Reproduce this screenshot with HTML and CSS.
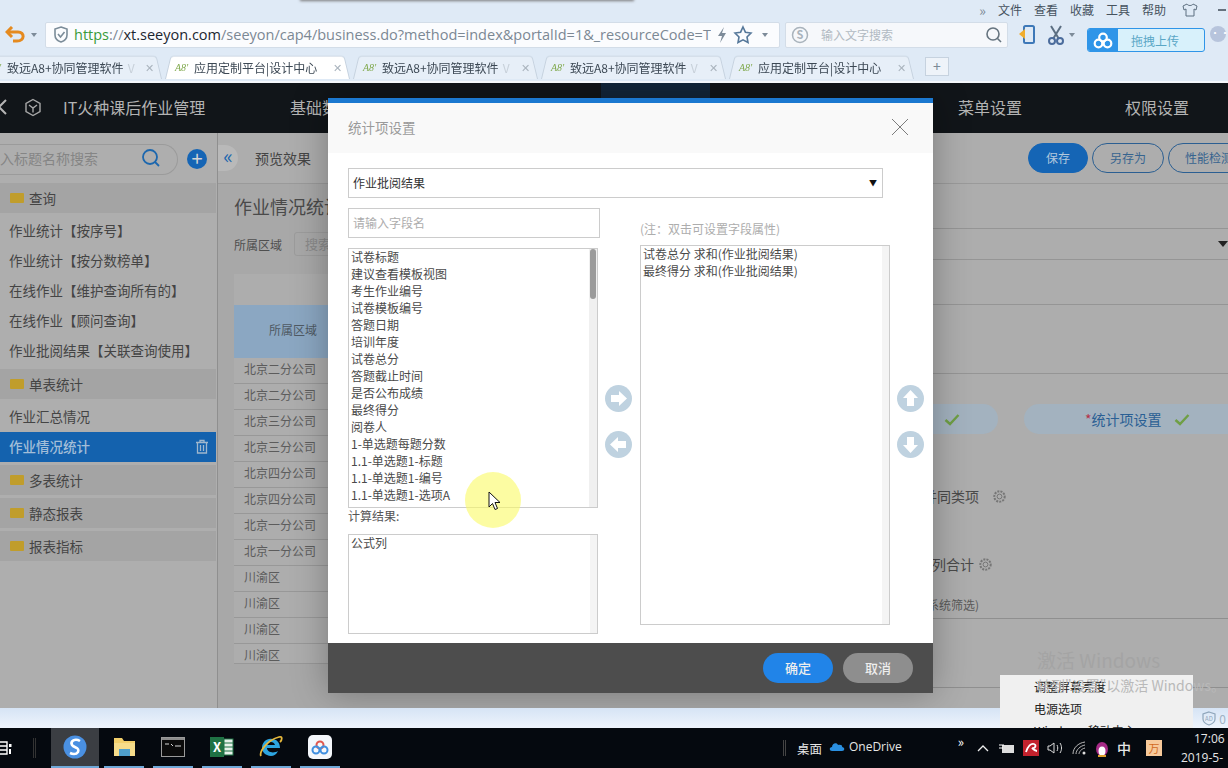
FILE: index.html
```html
<!DOCTYPE html>
<html lang="zh-CN">
<head>
    <meta charset="UTF-8">
    <title>应用定制平台|设计中心</title>
    <link rel="stylesheet" href="styles.css">
</head>
<body>
<div class="browser">
    <div class="menu-row">
        <span class="menu-more">»</span>
        <span>文件</span><span>查看</span><span>收藏</span><span>工具</span><span>帮助</span>
        <svg class="shirt" width="18" height="16" viewBox="0 0 18 16"><path d="M6 2 L2 4 L3 8 L5 7 V14 H13 V7 L15 8 L16 4 L12 2 C11 4 7 4 6 2Z" fill="none" stroke="#5d6f80"/></svg>
        <span class="menu-min"></span>
    </div>
    <div class="address-row">
        <svg class="back" width="22" height="18" viewBox="0 0 22 18"><path d="M3 6 H13 C20 6 20 15 12 15 H8" fill="none" stroke="#e58a1f" stroke-width="3"/><path d="M7 1 L2 6 L7 11" fill="none" stroke="#e58a1f" stroke-width="3"/></svg>
        <span class="caret"></span>
        <div class="address">
            <svg width="16" height="17" viewBox="0 0 16 17"><path d="M8 1 L14 3 V9 C14 13 11 15 8 16 C5 15 2 13 2 9 V3Z" fill="none" stroke="#7b8c99" stroke-width="1.6"/><path d="M5 8 L7.5 11 L11.5 6" fill="none" stroke="#7b8c99" stroke-width="1.6"/></svg>
            <div class="url"><span class="https">https</span>://<span class="host">xt.seeyon.com</span>/seeyon/cap4/business.do?method=index&amp;portalId=1&amp;_resourceCode=T</div>
            <svg width="12" height="18" viewBox="0 0 12 18"><path d="M8 1 L2 10 H6 L4 17 L10 7 H6Z" fill="#7d8b99"/></svg>
            <svg width="20" height="19" viewBox="0 0 20 19"><path d="M10 2 L12.4 7.2 L18 8 L14 12 L15 17.5 L10 14.8 L5 17.5 L6 12 L2 8 L7.6 7.2Z" fill="none" stroke="#56789a" stroke-width="1.6"/></svg>
            <span class="caret"></span>
        </div>
        <div class="search-box">
            <svg width="18" height="18" viewBox="0 0 18 18"><circle cx="9" cy="9" r="7.5" fill="none" stroke="#a9b3bc" stroke-width="1.5"/><text x="9" y="13" text-anchor="middle" class="s-mark">S</text></svg>
            <span class="search-hint">输入文字搜索</span>
            <svg width="18" height="18" viewBox="0 0 18 18"><circle cx="8" cy="8" r="6" fill="none" stroke="#66747f" stroke-width="1.6"/><path d="M12.5 12.5 L16 16" stroke="#66747f" stroke-width="1.6"/></svg>
        </div>
        <svg class="tool-phone" width="18" height="20" viewBox="0 0 18 20"><rect x="6" y="1" width="10" height="17" rx="1.5" fill="none" stroke="#3d78b8" stroke-width="2"/><path d="M1 9 L7 4 V14Z" fill="#f0ad2e"/></svg>
        <svg class="tool-cut" width="18" height="20" viewBox="0 0 18 20"><path d="M4 1 L12 14 M14 1 L6 14" stroke="#5c6f82" stroke-width="2"/><circle cx="5" cy="16" r="3" fill="none" stroke="#4b6c9c" stroke-width="2"/><circle cx="13" cy="16" r="3" fill="none" stroke="#4b6c9c" stroke-width="2"/></svg>
        <span class="caret"></span>
    </div>
    <div class="tab-row">
        <div class="tab tab-first"><i class="fav">A8'</i><span class="tab-title">致远A8+协同管理软件</span><span class="tab-fade">V</span><span class="tab-x">✕</span></div>
        <div class="tab tab-on"><i class="fav">A8'</i><span class="tab-title">应用定制平台|设计中心</span><span class="tab-x">✕</span></div>
        <div class="tab"><i class="fav">A8'</i><span class="tab-title">致远A8+协同管理软件</span><span class="tab-fade">V</span><span class="tab-x">✕</span></div>
        <div class="tab"><i class="fav">A8'</i><span class="tab-title">致远A8+协同管理软件</span><span class="tab-fade">V</span><span class="tab-x">✕</span></div>
        <div class="tab"><i class="fav">A8'</i><span class="tab-title">应用定制平台|设计中心</span><span class="tab-x">✕</span></div>
        <div class="tab-add">+</div>
    </div>
</div>

<div class="app">
    <div class="topnav">
        <svg class="nav-back" width="10" height="18" viewBox="0 0 10 18"><path d="M8 2 L1 9 L8 16" fill="none" stroke="#b5b5b5" stroke-width="2"/></svg>
        <svg class="nav-cube" width="18" height="19" viewBox="0 0 18 19"><path d="M9 1.5 L16 5.5 V13.5 L9 17.5 L2 13.5 V5.5Z M5 7 L9 10 L13 7 M9 10 V14.5" fill="none" stroke="#a8a8a8" stroke-width="1.4"/></svg>
        <span class="nav-title">IT火种课后作业管理</span>
        <span class="nav-item nav-base">基础数据</span>
        <span class="nav-item nav-menu">菜单设置</span>
        <span class="nav-item nav-perm">权限设置</span>
    </div>
    <div class="workspace">
        <div class="sidebar">
            <div class="side-search">
                <div class="side-input">
                    <span>入标题名称搜索</span>
                    <svg width="20" height="20" viewBox="0 0 20 20"><circle cx="9" cy="9" r="7" fill="none" stroke="#1c67ae" stroke-width="1.8"/><path d="M14 14 L18 18" stroke="#1c67ae" stroke-width="1.8"/></svg>
                </div>
                <span class="side-add">+</span>
            </div>
            <div class="side-group"><span class="folder"></span>查询</div>
            <div class="side-item">作业统计【按序号】</div>
            <div class="side-item">作业统计【按分数榜单】</div>
            <div class="side-item">在线作业【维护查询所有的】</div>
            <div class="side-item">在线作业【顾问查询】</div>
            <div class="side-item">作业批阅结果【关联查询使用】</div>
            <div class="side-group"><span class="folder"></span>单表统计</div>
            <div class="side-item">作业汇总情况</div>
            <div class="side-item side-on">作业情况统计
                <svg width="14" height="15" viewBox="0 0 14 15"><path d="M1 3.5 H13 M5 3 V1.5 H9 V3 M2.5 3.5 V14 H11.5 V3.5 M5.5 6 V12 M8.5 6 V12" fill="none" stroke="#9fb7cd" stroke-width="1.3"/></svg>
            </div>
            <div class="side-group group-gap"><span class="folder"></span>多表统计</div>
            <div class="side-group group-gap"><span class="folder"></span>静态报表</div>
            <div class="side-group group-gap"><span class="folder"></span>报表指标</div>
        </div>
        <div class="main">
            <div class="toolbar">
                <span class="collapse">«</span>
                <span class="preview">预览效果</span>
                <span class="btn btn-save">保存</span>
                <span class="btn">另存为</span>
                <span class="btn btn-last">性能检测</span>
            </div>
            <div class="panes">
                <div class="center">
                    <h2 class="report-title">作业情况统计</h2>
                    <div class="filter"><span>所属区域</span><span class="filter-input">搜索</span></div>
                    <div class="table-top"></div>
                    <div class="table-head">所属区域</div>
                    <div class="table-row">北京二分公司</div>
                    <div class="table-row">北京二分公司</div>
                    <div class="table-row">北京三分公司</div>
                    <div class="table-row">北京三分公司</div>
                    <div class="table-row">北京四分公司</div>
                    <div class="table-row">北京四分公司</div>
                    <div class="table-row">北京一分公司</div>
                    <div class="table-row">北京一分公司</div>
                    <div class="table-row">川渝区</div>
                    <div class="table-row">川渝区</div>
                    <div class="table-row">川渝区</div>
                    <div class="table-row row-cut">川渝区</div>
                </div>
                <div class="props">
                    <div class="prop-line line-45"></div>
                    <div class="prop-line line-31"><span class="prop-arrow"></span></div>
                    <div class="prop-line line-45"></div>
                    <div class="prop-line line-69"></div>
                    <div class="pills">
                        <div class="pill pill-short">
                            <svg width="16" height="13" viewBox="0 0 16 13"><path d="M1.5 7 L6 11 L14.5 2" fill="none" stroke="#6f9f45" stroke-width="2.4"/></svg>
                        </div>
                        <div class="pill pill-long">
                            <span><b>*</b>统计项设置</span>
                            <svg width="16" height="13" viewBox="0 0 16 13"><path d="M1.5 7 L6 11 L14.5 2" fill="none" stroke="#6f9f45" stroke-width="2.4"/></svg>
                        </div>
                    </div>
                    <div class="prop-opt opt-merge">合并同类项
                        <svg class="gear" width="15" height="15" viewBox="0 0 15 15"><circle cx="7.5" cy="7.5" r="2.4" fill="none" stroke="#767676"/><circle cx="7.5" cy="7.5" r="5.2" fill="none" stroke="#767676" stroke-width="2" stroke-dasharray="2 1.1"/></svg>
                    </div>
                    <div class="prop-opt opt-sum">行列合计
                        <svg class="gear" width="15" height="15" viewBox="0 0 15 15"><circle cx="7.5" cy="7.5" r="2.4" fill="none" stroke="#767676"/><circle cx="7.5" cy="7.5" r="5.2" fill="none" stroke="#767676" stroke-width="2" stroke-dasharray="2 1.1"/></svg>
                    </div>
                    <div class="prop-note">(系统筛选)</div>
                    <div class="prop-rule"></div>
                    <div class="prop-rule rule-low"></div>
                </div>
            </div>
        </div>
    </div>

    <div class="modal">
        <div class="modal-head">
            <span>统计项设置</span>
            <svg width="18" height="18" viewBox="0 0 18 18"><path d="M1 1 L17 17 M17 1 L1 17" stroke="#6d6d6d" stroke-width="0.9"/></svg>
        </div>
        <div class="modal-body">
            <div class="form-select">作业批阅结果<span>▼</span></div>
            <div class="transfer">
                <div class="col">
                    <div class="field-input">请输入字段名</div>
                    <div class="field-list">
                        <div class="list-items">
                            <div>试卷标题</div>
                            <div>建议查看模板视图</div>
                            <div>考生作业编号</div>
                            <div>试卷模板编号</div>
                            <div>答题日期</div>
                            <div>培训年度</div>
                            <div>试卷总分</div>
                            <div>答题截止时间</div>
                            <div>是否公布成绩</div>
                            <div>最终得分</div>
                            <div>阅卷人</div>
                            <div>1-单选题每题分数</div>
                            <div>1.1-单选题1-标题</div>
                            <div>1.1-单选题1-编号</div>
                            <div>1.1-单选题1-选项A</div>
                        </div>
                        <div class="scroll"><span></span></div>
                    </div>
                    <div class="result-label">计算结果:</div>
                    <div class="result-box">公式列</div>
                </div>
                <div class="arrows">
                    <svg width="27" height="27" viewBox="0 0 27 27"><circle cx="13.5" cy="13.5" r="13.5" fill="#bfd2e0"/><path d="M6 10 H14 V6 L22 13.5 L14 21 V17 H6Z" fill="#fff"/></svg>
                    <svg width="27" height="27" viewBox="0 0 27 27"><circle cx="13.5" cy="13.5" r="13.5" fill="#bfd2e0"/><path d="M21 10 H13 V6 L5 13.5 L13 21 V17 H21Z" fill="#fff"/></svg>
                </div>
                <div class="col">
                    <div class="picked-note">(注：双击可设置字段属性)</div>
                    <div class="picked-list">
                        <div>试卷总分 求和(作业批阅结果)</div>
                        <div>最终得分 求和(作业批阅结果)</div>
                    </div>
                </div>
                <div class="arrows">
                    <svg width="27" height="27" viewBox="0 0 27 27"><circle cx="13.5" cy="13.5" r="13.5" fill="#bfd2e0"/><path d="M10 21 V13 H6 L13.5 5 L21 13 H17 V21Z" fill="#fff"/></svg>
                    <svg width="27" height="27" viewBox="0 0 27 27"><circle cx="13.5" cy="13.5" r="13.5" fill="#bfd2e0"/><path d="M10 6 V14 H6 L13.5 22 L21 14 H17 V6Z" fill="#fff"/></svg>
                </div>
            </div>
        </div>
        <div class="modal-foot">
            <span class="foot-btn foot-ok">确定</span>
            <span class="foot-btn foot-cancel">取消</span>
        </div>
    </div>
</div>

<div class="statusbar">
    <svg width="14" height="15" viewBox="0 0 14 15"><path d="M7 1 L13 3 V8 C13 11 10 13 7 14 C4 13 1 11 1 8 V3Z" fill="none" stroke="#8fa6bb" stroke-width="1.2"/><text x="7" y="10" text-anchor="middle" class="ad-mark">AD</text></svg>
    <span>0</span>
</div>

<div class="taskbar">
    <svg class="task-view" width="12" height="16" viewBox="0 0 12 16"><path d="M0 2 H7 V14 H0 M0 6 H7 M0 10 H7" fill="none" stroke="#fff" stroke-width="1.4"/><rect x="9" y="4" width="2.5" height="3" fill="#fff"/><rect x="9" y="9" width="2" height="5" fill="#fff"/></svg>
    <span class="task-sep"></span>
    <div class="task-app task-active">
        <svg width="24" height="24" viewBox="0 0 24 24"><circle cx="12" cy="12" r="11.5" fill="#4a90e2"/><path d="M17 6 C12 3 7 6 9 10 C11 13 17 12 15 17 C13 20 9 19 7 18" fill="none" stroke="#fff" stroke-width="2.6"/></svg>
    </div>
    <div class="task-app">
        <svg width="23" height="20" viewBox="0 0 23 20"><path d="M1 1 H9 L11 4 H22 V19 H1Z" fill="#f2cf6b"/><rect x="1" y="6" width="21" height="13" fill="#f6dc8a"/><rect x="6" y="12" width="11" height="7" fill="#4f9fcb"/></svg>
    </div>
    <div class="task-app">
        <svg width="24" height="20" viewBox="0 0 24 20"><rect x="0.5" y="0.5" width="23" height="19" fill="#0b0b0b" stroke="#9a9a9a"/><rect x="1" y="1" width="22" height="2" fill="#8c8c8c"/><path d="M4 7 H8 M10 7 L12 9 M14 9 H20" stroke="#d8d8d8"/></svg>
    </div>
    <div class="task-app">
        <svg width="24" height="20" viewBox="0 0 24 20"><rect x="8" y="2" width="15" height="16" fill="#e7f1ea" stroke="#1f7244"/><path d="M14 2 V18 M8 6 H23 M8 10 H23 M8 14 H23" stroke="#1f7244"/><rect x="0" y="0" width="14" height="20" fill="#1f7244"/><text x="7" y="15" text-anchor="middle" class="xl-mark">X</text></svg>
    </div>
    <div class="task-app">
        <svg width="24" height="24" viewBox="0 0 24 24"><path d="M3 13 C3 7 8 3 13 4 C18 4 21 8 21 13 H8 C8 17 14 19 19 16 C17 21 12 22 8 20 C5 19 3 16 3 13Z M8 10 H16 C15 6 9 6 8 10Z" fill="#2da5e0" fill-rule="evenodd"/><path d="M2 21 C0 17 8 5 20 2 C24 1 23 5 21 7" fill="none" stroke="#e8b93c" stroke-width="1.8"/></svg>
    </div>
    <div class="task-app">
        <span class="cloud-tile"><svg width="18" height="15" viewBox="0 0 18 15"><circle cx="9" cy="5" r="3.5" fill="none" stroke="#e0574f" stroke-width="2"/><circle cx="5" cy="10" r="3.5" fill="none" stroke="#3f8fe0" stroke-width="2"/><circle cx="13" cy="10" r="3.5" fill="none" stroke="#3f8fe0" stroke-width="2"/></svg></span>
    </div>
    <span class="task-fill"></span>
    <span class="task-sep2"></span>
    <span class="task-text desk">桌面</span>
    <svg class="drive-icon" width="16" height="10" viewBox="0 0 16 10"><path d="M3 10 C0 10 0 6 3 6 C3 2 8 1 9 4 C12 3 14 5 13 6 C16 6 16 10 13 10Z" fill="#2a8fe0"/></svg>
    <span class="task-text drive">OneDrive</span>
    <span class="tray-more">»</span>
    <svg class="tray up" width="12" height="8" viewBox="0 0 12 8"><path d="M1 7 L6 2 L11 7" fill="none" stroke="#eee" stroke-width="1.3"/></svg>
    <svg class="tray" width="16" height="11" viewBox="0 0 16 11"><rect x="3" y="2" width="12" height="8" fill="#ddd"/><path d="M0 2 H5 M0 5 H4" stroke="#fff"/></svg>
    <span class="tray-tile tile-red"><svg width="13" height="12" viewBox="0 0 13 12"><path d="M1 10 C3 4 6 1 9 2 C12 3 10 7 7 6 C9 8 11 9 12 9" fill="none" stroke="#fff" stroke-width="1.8"/></svg></span>
    <svg class="tray" width="17" height="14" viewBox="0 0 17 14"><path d="M1 5 H3 L7 2 V12 L3 9 H1Z M10 4 C11 6 11 8 10 10 M13 2 C15 5 15 9 13 12" fill="none" stroke="#ddd"/></svg>
    <svg class="tray" width="15" height="14" viewBox="0 0 15 14"><path d="M1 13 C1 7 6 2 13 1 M4 13 C4 9 8 5 13 4 M7 13 C7 11 9 8 13 7" fill="none" stroke="#bbb"/><circle cx="12" cy="12" r="1.5" fill="#ddd"/></svg>
    <svg class="tray" width="14" height="17" viewBox="0 0 14 17"><ellipse cx="7" cy="9" rx="6" ry="7" fill="#a62a86"/><ellipse cx="7" cy="11" rx="3.5" ry="4.5" fill="#fff"/><path d="M3 15 H11 V17 H3Z" fill="#e0a22c"/></svg>
    <span class="task-text ime">中</span>
    <span class="tray-tile tile-orange">万</span>
    <div class="clock"><span>17:06</span><span>2019-5-</span></div>
</div>

<!-- over everything: window edge, balloon, tray menu, activation text, recorder cursor -->
<div class="window-edge"></div>
<div class="upload-badge">
    <span class="upload-icon"><svg width="20" height="17" viewBox="0 0 20 17"><circle cx="10" cy="5.5" r="3.8" fill="none" stroke="#fff" stroke-width="2.2"/><circle cx="5.5" cy="11.5" r="3.8" fill="none" stroke="#fff" stroke-width="2.2"/><circle cx="14.5" cy="11.5" r="3.8" fill="none" stroke="#fff" stroke-width="2.2"/></svg></span>
    <span class="upload-text">拖拽上传</span>
</div>
<span class="user-dot">···</span>
<div class="tray-menu">
    <div>调整屏幕亮度</div>
    <div>电源选项</div>
    <div>Windows 移动中心</div>
</div>
<div class="activate">
    <div class="activate-big">激活 Windows</div>
    <div>转到"设置"以激活 Windows。</div>
</div>
<div class="cursor-glow"></div>
<svg class="cursor" width="13" height="20" viewBox="0 0 13 20"><path d="M1 1 V16 L4.5 12.5 L7 18.5 L9.5 17.5 L7 11.5 H12Z" fill="#fff" stroke="#111"/></svg>
</body>
</html>
```

FILE: styles.css
```css
* {
    box-sizing: border-box;
}

html, body {
    margin: 0;
    height: 768px;
    overflow: hidden;
}

body {
    position: relative;
    width: 1228px;
    display: flex;
    flex-direction: column;
    font-family: "Noto Sans CJK SC", "Liberation Sans", sans-serif;
    font-size: 12px;
    color: #333;
    background: #adadad;
}

/* browser chrome */
.browser {
    height: 83px;
    flex: none;
    background: #dfeaf6;
    border-bottom: 2px solid #f4f7fb;
    overflow: hidden;
}

.menu-row {
    height: 20px;
    display: flex;
    align-items: center;
    justify-content: flex-end;
    gap: 12px;
    color: #46525e;
    line-height: 20px;
}

.menu-more {
    color: #7a8794;
    font-size: 14px;
}

.shirt {
    margin-left: 3px;
}

.menu-min {
    width: 8px;
    height: 2px;
    margin-left: 7px;
    margin-right: 2px;
    background: #66727e;
}

.address-row {
    height: 33px;
    display: flex;
    align-items: center;
    padding: 0 0 4px 5px;
}

.caret {
    width: 0;
    height: 0;
    margin-left: 4px;
    border: 3px solid transparent;
    border-top: 4px solid #7d8b99;
    border-bottom: 0;
}

.address {
    width: 735px;
    height: 26px;
    margin-left: 8px;
    display: flex;
    align-items: center;
    padding: 0 11px 0 7px;
    gap: 5px;
    background: #fbfcfe;
    border: 1px solid #d3dde8;
    border-radius: 2px;
}

.url {
    flex: 1;
    white-space: nowrap;
    overflow: hidden;
    font-family: "Open Sans", "Liberation Sans", sans-serif;
    font-size: 14.5px;
    color: #7c8894;
}

.https {
    color: #3a9b3a;
}

.host {
    color: #1c2630;
}

.search-box {
    width: 223px;
    height: 26px;
    margin-left: 5px;
    display: flex;
    align-items: center;
    padding: 0 4px 0 5px;
    background: #f6f8fb;
    border: 1px solid #d3dde8;
    border-radius: 2px;
}

.search-hint {
    flex: 1;
    padding-left: 12px;
    color: #b1bac2;
}

.s-mark {
    font-size: 11px;
    font-weight: bold;
    fill: #a9b3bc;
}

.xl-mark {
    font-size: 13px;
    font-weight: bold;
    fill: #fff;
}

.tool-phone {
    margin-left: 10px;
}

.tool-cut {
    margin-left: 11px;
}

.tab-row {
    height: 26px;
    display: flex;
    gap: 3px;
    margin-left: -18px;
    align-items: flex-end;
}

.tab {
    position: relative;
    width: 185px;
    height: 25px;
    display: flex;
    align-items: center;
    padding: 1px 8px 0 10px;
    color: #3c4854;
    white-space: nowrap;
}

.tab::before {
    content: "";
    position: absolute;
    inset: 0;
    z-index: 0;
    background: #e7eff8;
    border: 1px solid #c6d2df;
    border-bottom: 0;
    border-radius: 4px 4px 0 0;
    transform: perspective(40px) rotateX(6deg);
    transform-origin: bottom;
}

.tab > * {
    position: relative;
}

.tab-first {
    width: 180px;
    padding-left: 6px;
}

.tab-on::before {
    background: #fff;
}

.fav {
    width: 19px;
    font-family: "Liberation Serif", serif;
    font-size: 10px;
    color: #7fa84b;
    flex: none;
}

.tab-title {
    flex: none;
}

.tab-fade {
    margin-left: 4px;
    color: #c7d0d9;
}

.tab-x {
    margin-left: auto;
    color: #a9b3bd;
    font-size: 11px;
}

.tab-add {
    width: 24px;
    height: 19px;
    margin: 0 0 3px 8px;
    color: #7c8a97;
    font-size: 14px;
    line-height: 17px;
    text-align: center;
    background: #eef3f9;
    border: 1px solid #c6d2df;
}

/* application, dimmed by the dialog */
.app {
    position: relative;
    height: 625px;
    flex: none;
    overflow: hidden;
}

.topnav {
    height: 50px;
    display: flex;
    align-items: center;
    padding-bottom: 2px;
    background: linear-gradient(to right, #111519 601px, #13263a 601px, #13263a 710px, #111519 710px);
    color: #b3b3b3;
    font-size: 16px;
}

.nav-back {
    margin-left: -2px;
}

.nav-cube {
    margin-left: 16px;
}

.nav-title {
    margin-left: 21px;
    width: 227px;
}

.nav-base {
    width: 668px;
}

.nav-menu {
    width: 167px;
}

.workspace {
    height: 575px;
    display: flex;
}

.sidebar {
    width: 218px;
    flex: none;
    border-right: 1px solid #8f8f8f;
    background: #aeaeae;
}

.side-search {
    height: 50px;
    display: flex;
    align-items: center;
    padding-top: 2px;
}

.side-input {
    width: 178px;
    height: 31px;
    display: flex;
    align-items: center;
    justify-content: space-between;
    padding: 0 16px 2px 0;
    font-size: 14px;
    color: #858585;
    border: 1px solid #9b9b9b;
    border-left: 0;
    border-radius: 0 16px 16px 0;
}

.side-add {
    width: 20px;
    height: 20px;
    margin-left: 9px;
    border-radius: 50%;
    background: #1565b5;
    color: #d4d4d4;
    font-size: 20px;
    line-height: 18px;
    text-align: center;
}

.side-group {
    width: 216px;
    height: 30px;
    display: flex;
    align-items: center;
    padding-left: 10px;
    font-size: 13.5px;
    color: #444;
    background: #a4a4a4;
}

.group-gap {
    margin-top: 3px;
}

.folder {
    width: 14px;
    height: 10px;
    margin-right: 5px;
    border-radius: 1px;
    background: #c09d2c;
}

.side-item {
    width: 216px;
    height: 30px;
    display: flex;
    align-items: center;
    justify-content: space-between;
    padding: 0 7px 2px 9px;
    font-size: 13.5px;
    color: #444;
    white-space: nowrap;
}

.side-group + .side-item {
    margin-top: 3px;
}

.side-item:has(+ .side-group) {
    margin-bottom: 3px;
}

.side-on {
    background: #1462ae;
    color: #a3bed8;
    font-weight: 500;
}

.main {
    flex: 1;
    min-width: 0;
    display: flex;
    flex-direction: column;
}

.toolbar {
    height: 51px;
    flex: none;
    display: flex;
    align-items: center;
    padding-bottom: 1px;
    border-bottom: 1px solid #9a9a9a;
}

.collapse {
    width: 20px;
    height: 26px;
    flex: none;
    color: #1c67ae;
    background: #b9b9b9;
    font-size: 20px;
    line-height: 22px;
    text-align: center;
    border-radius: 0 13px 13px 0;
}

.preview {
    width: 773px;
    flex: none;
    margin-left: 17px;
    font-size: 14px;
    color: #444;
}

.btn {
    width: 72px;
    height: 30px;
    flex: none;
    margin-left: 4px;
    color: #37648f;
    line-height: 28px;
    text-align: center;
    border: 1px solid #2b5f92;
    border-radius: 15px;
}

.btn-save {
    width: 60px;
    margin-left: 0;
    color: #b2c8dd;
    background: #1565b5;
    border-color: #1565b5;
}

.btn-last {
    width: 90px;
    padding-left: 16px;
    text-align: left;
    white-space: nowrap;
}

.panes {
    flex: 1;
    display: flex;
    min-height: 0;
}

.center {
    width: 542px;
    flex: none;
    padding-left: 16px;
    overflow: hidden;
    background: #a8a8a8;
}

.report-title {
    margin: 10px 0 0;
    font-size: 18px;
    font-weight: 400;
    line-height: 25px;
    color: #4a4a4a;
}

.filter {
    height: 26px;
    margin-top: 12px;
    display: flex;
    align-items: center;
    gap: 12px;
    color: #4f4f4f;
}

.filter-input {
    width: 200px;
    height: 24px;
    padding-left: 10px;
    line-height: 22px;
    color: #8a8a8a;
    font-size: 13px;
    border: 1px solid #9c9c9c;
    border-radius: 3px;
}

.table-top {
    height: 31px;
    margin-top: 17px;
    background: #adadad;
}

.table-head {
    height: 53px;
    padding-left: 35px;
    line-height: 50px;
    color: #4f5a64;
    background: #8ba7c2;
}

.table-row {
    height: 26px;
    padding-left: 10px;
    line-height: 22px;
    color: #5c5c5c;
    background: #adadad;
    border-bottom: 1px solid #989898;
}

.row-cut {
    height: 20px;
    overflow: hidden;
}

.props {
    flex: 1;
    min-width: 0;
    overflow: hidden;
}

.prop-line {
    position: relative;
    border-bottom: 1px solid #959595;
}

.line-45 {
    height: 45px;
}

.line-31 {
    height: 31px;
}

.line-69 {
    height: 69px;
}

.prop-arrow {
    position: absolute;
    right: 0;
    top: 12px;
    border: 5px solid transparent;
    border-top: 6px solid #222;
    border-bottom: 0;
}

.pills {
    display: flex;
    gap: 26px;
    margin-top: 30px;
    padding-left: 40px;
}

.pill {
    height: 30px;
    display: flex;
    align-items: center;
    flex: none;
    border-radius: 15px;
    background: #a3b2bf;
}

.pill-short {
    width: 198px;
    justify-content: flex-end;
    padding-right: 38px;
}

.pill-long {
    width: 240px;
    padding-left: 61px;
    gap: 12px;
    font-size: 14px;
    color: #2a5f94;
}

.pill-long b {
    color: #b5324a;
    font-weight: 400;
}

.prop-opt {
    display: flex;
    align-items: center;
    font-size: 14px;
    color: #4a4a4a;
    line-height: 20px;
}

.opt-merge {
    margin-top: 52px;
    padding-left: 149px;
    gap: 13px;
}

.opt-sum {
    margin-top: 48px;
    padding-left: 158px;
    gap: 4px;
}

.prop-note {
    margin-top: 22px;
    padding-left: 163px;
    line-height: 18px;
    color: #5a5a5a;
}

.prop-rule {
    margin-top: 4px;
    border-bottom: 1px solid #8f8f8f;
}

.rule-low {
    margin-top: 68px;
}

/* dialog */
.modal {
    position: absolute;
    left: 328px;
    top: 15px;
    width: 605px;
    height: 595px;
    background: #fff;
    border-top: 5px solid #1b78d0;
    box-shadow: 0 0 34px rgba(0, 0, 0, 0.3);
    display: flex;
    flex-direction: column;
}

.modal-head {
    height: 50px;
    flex: none;
    display: flex;
    align-items: center;
    justify-content: space-between;
    padding: 0 24px 2px 20px;
    font-size: 13.5px;
    color: #9a9a9a;
    background: #f9f9f9;
}

.modal-body {
    flex: 1;
    padding: 15px 0 0 20px;
}

.form-select {
    width: 535px;
    height: 30px;
    display: flex;
    align-items: center;
    justify-content: space-between;
    padding: 0 5px 2px 4px;
    color: #333;
    border: 1px solid #ccc;
}

.form-select span {
    font-size: 8px;
    color: #111;
}

.transfer {
    display: flex;
    margin-top: 10px;
}

.col {
    width: 250px;
    flex: none;
}

.field-input {
    width: 252px;
    height: 30px;
    padding-left: 4px;
    line-height: 28px;
    color: #adadad;
    border: 1px solid #ccc;
}

.field-list {
    height: 260px;
    margin-top: 10px;
    display: flex;
    overflow: hidden;
    border: 1px solid #ccc;
}

.list-items {
    flex: 1;
    margin-top: -1px;
    padding-left: 2px;
    line-height: 17px;
    color: #4a4a4a;
}

.scroll {
    width: 8px;
    flex: none;
    padding: 0 1px;
    background: #f0f0f0;
}

.scroll span {
    display: block;
    height: 50px;
    border-radius: 3px;
    background: #9b9b9b;
}

.result-label {
    height: 26px;
    line-height: 15px;
    color: #555;
}

.result-box {
    height: 100px;
    padding-left: 2px;
    line-height: 15px;
    color: #4a4a4a;
    border: 1px solid #ccc;
    background: linear-gradient(to left, #f4f4f4 7px, #fff 7px);
}

.arrows {
    width: 42px;
    flex: none;
    display: flex;
    flex-direction: column;
    align-items: center;
    gap: 19px;
    padding: 177px 1px 0 0;
}

.picked-note {
    height: 37px;
    padding-top: 12px;
    line-height: 18px;
    color: #adadad;
}

.picked-list {
    height: 380px;
    padding-left: 2px;
    line-height: 17px;
    color: #4a4a4a;
    border: 1px solid #ccc;
    background: linear-gradient(to left, #f4f4f4 7px, #fff 7px);
}

.picked-list div:first-child {
    margin-top: -1px;
}

.modal-foot {
    height: 50px;
    flex: none;
    display: flex;
    align-items: center;
    justify-content: flex-end;
    gap: 10px;
    padding-right: 20px;
    background: #4d4d4d;
}

.foot-btn {
    width: 70px;
    height: 30px;
    color: #eee;
    font-size: 13px;
    font-weight: 500;
    line-height: 30px;
    text-align: center;
    border-radius: 15px;
}

.foot-ok {
    background: #2184e8;
}

.foot-cancel {
    background: #8e8e8e;
}

/* bottom of the browser and the windows taskbar */
.statusbar {
    height: 20px;
    flex: none;
    display: flex;
    align-items: center;
    justify-content: flex-end;
    gap: 3px;
    padding-right: 2px;
    color: #9fb2c4;
    background: linear-gradient(#d6e4f5, #eef4fc);
}

.ad-mark {
    font-size: 6px;
    fill: #8fa6bb;
}

.taskbar {
    height: 40px;
    flex: none;
    display: flex;
    align-items: center;
    background: #05090f;
    color: #e6e6e6;
    overflow: hidden;
}

.task-sep {
    width: 3px;
    height: 20px;
    margin: 0 15px 0 21px;
    border-left: 1px solid #333;
    border-right: 1px solid #333;
}

.task-view {
    flex: none;
}

.task-app {
    width: 40px;
    height: 40px;
    margin-right: 9px;
    flex: none;
    display: flex;
    align-items: center;
    justify-content: center;
    border-bottom: 2px solid #6fa8d8;
}

.task-active {
    width: 48px;
    margin-right: 5px;
    background: #3b3e43;
}

.cloud-tile {
    width: 24px;
    height: 24px;
    display: flex;
    align-items: center;
    justify-content: center;
    border-radius: 5px;
    background: #f4f7fb;
}

.task-fill {
    flex: 1;
}

.task-sep2 {
    width: 3px;
    height: 16px;
    margin-right: 11px;
    border-left: 1px solid #444;
    border-right: 1px solid #444;
}

.task-text {
    font-size: 12.5px;
    flex: none;
}

.desk {
    margin-right: 7px;
}

.drive-icon {
    margin-right: 4px;
    margin-top: -4px;
}

.drive {
    font-family: "Open Sans", "Liberation Sans", sans-serif;
    font-size: 12px;
    margin-right: 56px;
    margin-top: -4px;
}

.tray-more {
    margin-right: 13px;
    margin-top: -14px;
    font-size: 13px;
    color: #fff;
}

.tray {
    margin-right: 8px;
    flex: none;
}

.up {
    margin-right: 10px;
}

.tray-tile {
    width: 16px;
    height: 16px;
    margin-right: 8px;
    flex: none;
    display: flex;
    align-items: center;
    justify-content: center;
    font-size: 11px;
}

.tile-red {
    background: #c3222d;
}

.tile-orange {
    margin-left: 15px;
    margin-right: 19px;
    color: #d2691e;
    background: #f7c99a;
}

.ime {
    font-size: 14px;
    font-weight: 500;
}

.clock {
    width: 47px;
    flex: none;
    display: flex;
    flex-direction: column;
    align-items: flex-start;
    font-family: "Open Sans", "Liberation Sans", sans-serif;
    line-height: 19px;
    font-size: 12px;
    white-space: nowrap;
}

.clock span:first-child {
    margin-left: 13px;
}

/* overlays */
.window-edge {
    position: absolute;
    left: 300px;
    top: -3px;
    width: 334px;
    height: 3px;
    box-shadow: 0 1px 3px #777;
}

.upload-badge {
    position: absolute;
    left: 1087px;
    top: 28px;
    width: 118px;
    height: 24px;
    display: flex;
    border: 1px solid #2f95e8;
    border-radius: 3px;
    background: #d8f1fb;
    overflow: hidden;
}

.upload-icon {
    width: 30px;
    display: flex;
    align-items: center;
    justify-content: center;
    background: #2f95e8;
}

.upload-text {
    flex: 1;
    padding-right: 12px;
    line-height: 23px;
    text-align: center;
    color: #5aa7c6;
}

.user-dot {
    position: absolute;
    left: 1210px;
    top: 26px;
    width: 16px;
    height: 16px;
    border-radius: 50%;
    background: #b7c4dc;
    color: #fff;
    font-size: 10px;
    line-height: 14px;
    text-align: center;
}

.tray-menu {
    position: absolute;
    left: 1000px;
    top: 675px;
    width: 193px;
    height: 53px;
    padding: 1px 0 0 34px;
    overflow: hidden;
    line-height: 22px;
    color: #222;
    background: #f0f0f0;
}

.activate {
    position: absolute;
    left: 1037px;
    top: 646px;
    color: #b9b9b9;
    font-size: 14px;
    line-height: 22px;
    white-space: nowrap;
}

.activate-big {
    font-size: 19px;
    color: #a4a4a4;
    line-height: 28px;
}

.cursor-glow {
    position: absolute;
    left: 465px;
    top: 472px;
    width: 56px;
    height: 56px;
    border-radius: 50%;
    background: rgba(250, 250, 100, 0.6);
}

.cursor {
    position: absolute;
    left: 488px;
    top: 491px;
}
```
